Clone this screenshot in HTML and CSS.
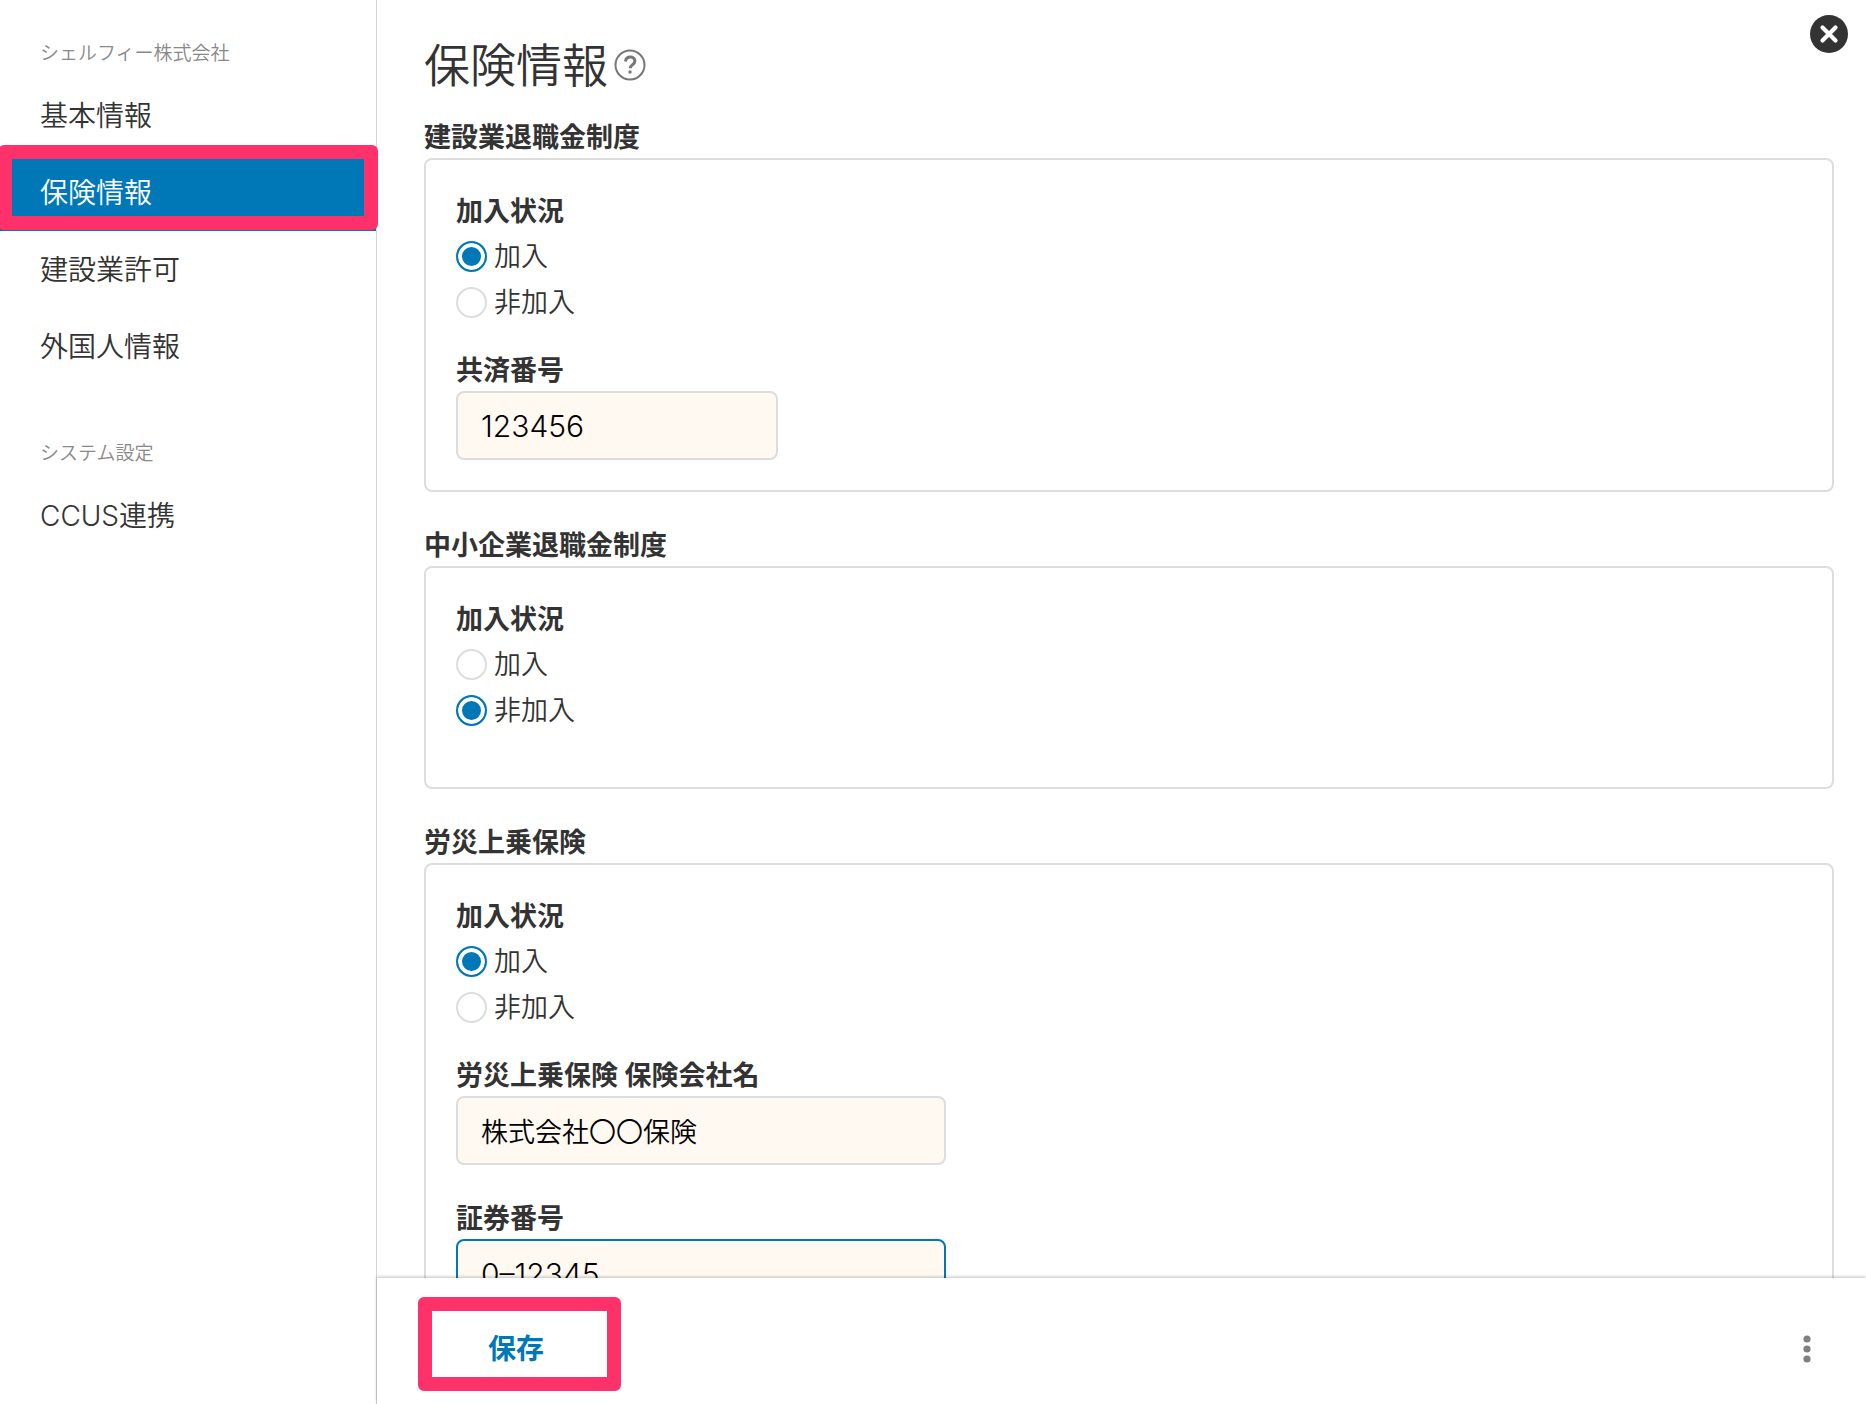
FILE: index.html
```html
<!DOCTYPE html>
<html lang="ja">
<head>
	<meta charset="utf-8">
	<meta name="viewport" content="width=device-width, initial-scale=1">
	<title>保険情報</title>
	<link rel="stylesheet" href="styles.css">
</head>

<body>
	<div class="layout">
		<nav class="sidebar">
			<h2 class="navTitle">シェルフィー株式会社</h2>
			<ul class="navList">
				<li><a href="#basic">基本情報</a></li>
				<li class="active"><a href="#insurance" aria-current="page">保険情報</a><span class="marker navMarker"></span></li>
				<li><a href="#license">建設業許可</a></li>
				<li><a href="#foreigner">外国人情報</a></li>
			</ul>
			<h2 class="navTitle">システム設定</h2>
			<ul class="navList">
				<li><a href="#ccus">CCUS連携</a></li>
			</ul>
		</nav>

		<main class="main">
			<form class="content" id="insuranceForm">
				<div class="pageHeader">
					<h1>保険情報</h1>
					<a href="#help" class="help" aria-label="ヘルプ">
						<svg width="32" height="32" viewBox="0 0 32 32" fill="none" stroke="#777" stroke-linecap="round" stroke-linejoin="round">
							<circle cx="16" cy="16" r="14.500" stroke-width="2"/>
							<path d="M11.5 12.5c.3-2.900 2.200-4.500 4.800-4.500 2.700 0 4.600 1.600 4.600 4 0 3.700-4.600 3.600-4.600 7.200" stroke-width="3" stroke-linecap="butt"/>
							<circle cx="16" cy="23" r="1.700" fill="#777" stroke="none"/>
						</svg>
					</a>
				</div>

				<section>
					<h3>建設業退職金制度</h3>
					<div class="card">
						<fieldset>
							<legend>加入状況</legend>
							<div class="radios">
								<label><input type="radio" name="kentaikyo" checked>加入</label>
								<label><input type="radio" name="kentaikyo">非加入</label>
							</div>
						</fieldset>
						<div class="field">
							<label for="kyosaiNo">共済番号</label>
							<input type="text" id="kyosaiNo" class="number short" value="123456">
						</div>
					</div>
				</section>

				<section>
					<h3>中小企業退職金制度</h3>
					<div class="card">
						<fieldset>
							<legend>加入状況</legend>
							<div class="radios">
								<label><input type="radio" name="chutaikyo">加入</label>
								<label><input type="radio" name="chutaikyo" checked>非加入</label>
							</div>
						</fieldset>
					</div>
				</section>

				<section>
					<h3>労災上乗保険</h3>
					<div class="card">
						<fieldset>
							<legend>加入状況</legend>
							<div class="radios">
								<label><input type="radio" name="rosai" checked>加入</label>
								<label><input type="radio" name="rosai">非加入</label>
							</div>
						</fieldset>
						<div class="field">
							<label for="company">労災上乗保険 保険会社名</label>
							<input type="text" id="company" value="株式会社〇〇保険">
						</div>
						<div class="field">
							<label for="policyNo">証券番号</label>
							<input type="text" id="policyNo" class="number current" value="0–12345">
						</div>
					</div>
				</section>
			</form>

			<footer class="actions">
				<button type="submit" form="insuranceForm" class="save">保存<span class="marker saveMarker"></span></button>
				<button type="button" class="more" aria-label="その他">
					<svg width="32" height="32" viewBox="0 0 32 32" fill="#808080">
						<circle cx="16" cy="6" r="3.600"/>
						<circle cx="16" cy="16" r="3.600"/>
						<circle cx="16" cy="26" r="3.600"/>
					</svg>
				</button>
			</footer>
		</main>
	</div>

	<button type="button" class="close" aria-label="閉じる">
		<svg width="38" height="38" viewBox="0 0 38 38">
			<circle cx="19" cy="19" r="19" fill="#333"/>
			<path d="M12.500 12.500l13 13M25.500 12.500l-13 13" stroke="#fff" stroke-width="4.200" stroke-linecap="round"/>
		</svg>
	</button>
</body>
</html>
```
FILE: styles.css
```css
* { box-sizing: border-box; }

body {
	margin: 0;
	color: #333;
	background-color: #fff;
	font: 350 27px/40px Inter, "Noto Sans CJK JP", sans-serif;
}
h1, h2, h3, ul, fieldset, legend { margin: 0; padding: 0; border: none; }
button { padding: 0; border: none; background: none; font: inherit; cursor: pointer; }
svg { display: block; }

.layout { display: flex; height: 100vh; }

/* sidebar */
.sidebar {
	flex: none;
	width: 377px;
	padding-top: 40px;
	border-right: 1px solid #d3d3d3;
}
.navTitle {
	padding: 0 40px 9px;
	color: #888;
	font-size: 19px;
	font-weight: 350;
	line-height: 28px;
}
.navList { list-style: none; font-size: 28px; }
.navList + .navTitle { margin-top: 55px; }
.navList li { position: relative; }
.navList a { display: block; padding: 2px 40px 0; color: #333; line-height: 75px; text-decoration: none; }
.navList .active a { background-color: #0078b8; color: #fff; }

/* pink frame drawn over an item */
.marker {
	position: absolute;
	border: 14px solid #ff316a;
	border-radius: 6px;
	pointer-events: none;
}
.navMarker { top: -9px; right: -2px; bottom: 1px; left: -2px; }
.saveMarker { top: -13px; right: -13px; bottom: -3px; left: -6px; }

/* main */
.main { flex: 1; display: flex; flex-direction: column; min-width: 0; }
.content {
	flex: 1;
	min-height: 0;
	padding: 30px 32px 32px 47px;
	overflow-y: auto;
	scrollbar-width: none;
}
.pageHeader { display: flex; align-items: center; gap: 6px; margin-bottom: 16px; }
h1 { font-size: 46px; font-weight: 350; line-height: 70px; }
h3, legend, .field label { display: block; padding-top: 2px; font-size: 27px; font-weight: 700; line-height: 40px; }
section { margin-bottom: 32px; }

.card { padding: 30px; border: 2px solid #ddd; border-radius: 8px; }
.radios { display: flex; flex-direction: column; align-items: flex-start; gap: 15px; padding: 9px 0 31px; }
.radios label { display: flex; align-items: center; gap: 7px; line-height: 31px; }
.radios input {
	appearance: none;
	width: 31px;
	height: 31px;
	margin: 0;
	border: 2px solid #ddd;
	border-radius: 50%;
	background-color: #fff;
}
.radios input:checked {
	border-color: #0078b8;
	background-color: #0078b8;
	box-shadow: inset 0 0 0 4px #fff;
}

.field + .field { margin-top: 32px; }
.field input {
	display: block;
	width: 490px;
	max-width: 100%;
	height: 69px;
	padding: 0 23px;
	border: 2px solid #ddd;
	border-radius: 8px;
	background-color: #fff9f2;
	color: #000;
	font: inherit;
}
.field .number { font-size: 30px; }
.field .short { width: 322px; }
.field .current { border-color: #0078b8; outline: none; }

/* footer */
.actions {
	position: relative;
	display: flex;
	align-items: center;
	justify-content: space-between;
	height: 126px;
	padding: 16px 43px 0 47px;
	background-color: #fff;
	box-shadow: 0 -1px 3px rgba(0, 0, 0, .25);
}
.save { position: relative; width: 184px; height: 78px; color: #0078b8; font-size: 28px; font-weight: 700; }

.close { position: absolute; top: 15px; right: 18px; }
```
